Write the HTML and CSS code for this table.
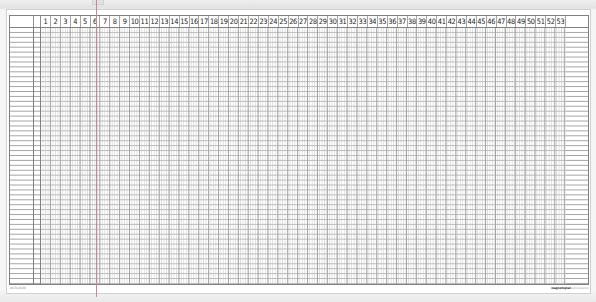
FILE: index.html
```html
<!DOCTYPE html>
<html>
<head>
<meta charset="utf-8">
<link rel="stylesheet" href="styles.css">
</head>
<body>
<div class="frame">
  <div class="tab"></div>
  <div class="marker"></div>
  <div class="board">
    <div class="chart">
      <div class="head">
        <div class="h-name"></div>
        <div class="h-sub"></div>
        <div class="weeks" id="weeks"></div>
        <div class="h-end"></div>
      </div>
      <div class="body">
        <div class="b-name"></div>
        <div class="b-sub"></div>
        <div class="b-weeks"></div>
        <div class="b-end"></div>
      </div>
    </div>
    <div class="foot">
      <span class="code">20-53-0130</span>
      <span class="logo"><b>magnetoplan</b> Jahresplaner</span>
    </div>
  </div>
</div>
<script src="script.js"></script>
</body>
</html>
```
FILE: script.js
```js
var w = document.getElementById('weeks');
for (var i = 1; i <= 53; i++) {
  var d = document.createElement('div');
  d.className = 'wk';
  d.textContent = i;
  w.appendChild(d);
}
```
FILE: styles.css
```css
html, body { margin: 0; padding: 0; }
body {
  width: 596px;
  height: 302px;
  overflow: hidden;
  background: #f2f2f2;
  font-family: "DejaVu Sans Condensed", "DejaVu Sans", sans-serif;
}
.frame {
  position: relative;
  height: 302px;
  box-sizing: border-box;
  padding: 9px 5px 8px 6px;
  background: linear-gradient(#efefef, #e2e2e2 8px, #f5f5f5 10px, #f5f5f5 290px, #e9e9e9);
}
.tab {
  position: absolute;
  left: 92px;
  top: 0;
  width: 10px;
  height: 4px;
  background: #e2e2e2;
  border: 1px solid #d2d2d2;
  border-top: 0;
}
.marker {
  position: absolute;
  left: 96px;
  top: 0;
  width: 1px;
  height: 297px;
  background: #c88893;
}
.board {
  height: 100%;
  box-sizing: border-box;
  background: #fff;
  border: 1px solid #d0d0d0;
  padding: 5px 1px 0 2px;
  display: flex;
  flex-direction: column;
}
.chart {
  border: 1px solid #808080;
  display: flex;
  flex-direction: column;
}
.head {
  display: flex;
  height: 11px;
  border-bottom: 1px solid #808080;
}
.h-name { width: 24px; box-sizing: border-box; border-right: 1px solid #909090; }
.h-sub { width: 7px; box-sizing: border-box; border-right: 1px solid #909090; }
.weeks {
  width: 525px;
  display: grid;
  grid-template-columns: repeat(53, 1fr);
}
.wk {
  box-sizing: border-box;
  border-right: 1px solid #a6a6a6;
  font-size: 7.4px;
  font-weight: 500;
  line-height: 11px;
  text-align: center;
  color: #222;
  letter-spacing: -0.3px;
}
.h-end { flex: 1; }
.body {
  display: flex;
  height: 256px;
}
.b-name, .b-sub, .b-end {
  background-image: linear-gradient(to bottom, transparent calc(100% - 1px), #a4a4a4 calc(100% - 1px));
  background-size: 100% calc(256px / 52);
}
.b-name { width: 24px; box-sizing: border-box; border-right: 1px solid #808080; }
.b-sub { width: 7px; box-sizing: border-box; border-right: 1px solid #808080; }
.b-weeks {
  width: 525px;
  background-image:
    linear-gradient(to right, transparent calc(100% - 1px), #a2a2a2 calc(100% - 1px)),
    linear-gradient(to bottom, transparent calc(100% - 1px), #bcbcbc calc(100% - 1px)),
    linear-gradient(to right, transparent calc(100% - 1px), #dcdcdc calc(100% - 1px));
  background-size:
    calc(525px / 53) 100%,
    100% calc(256px / 52),
    calc(525px / 53 / 4) 100%;
}
.b-end { flex: 1; }
.foot {
  display: flex;
  justify-content: space-between;
  padding: 1px 0 0 1px;
  font-size: 3px;
  line-height: 4px;
  color: #777;
}
.logo { color: #aaa; }
.logo b { color: #222; }
```
